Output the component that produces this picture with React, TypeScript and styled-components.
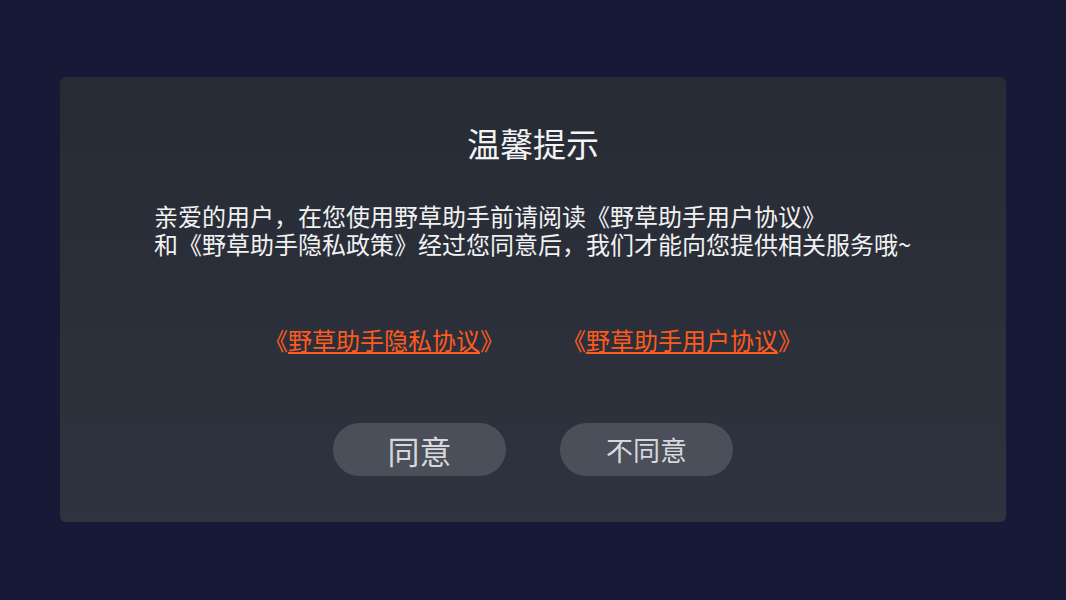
import React from "react";
import styled, { createGlobalStyle } from "styled-components";

const Global = createGlobalStyle`
  html, body { margin: 0; padding: 0; }
  body {
    background: #171a36;
    font-family: "Noto Sans CJK SC", "Noto Sans", sans-serif;
  }
`;

const Page = styled.div`
  width: 1066px;
  height: 600px;
  box-sizing: border-box;
  padding: 77px 60px 0 60px;
  background: #171a36;
`;

const Dialog = styled.div`
  width: 946px;
  height: 445px;
  box-sizing: border-box;
  border-radius: 6px;
  background: linear-gradient(180deg, #272b34 0%, #2e333f 100%);
  display: flex;
  flex-direction: column;
  align-items: center;
  padding: 46px 0 0 0;
`;

const Title = styled.h1`
  margin: 0;
  font-size: 33px;
  line-height: 40px;
  font-weight: 400;
  color: #f4f4f4;
`;

const Message = styled.p`
  align-self: stretch;
  margin: 39px 0 0 94px;
  font-size: 24px;
  line-height: 28px;
  color: #f2f2f2;
`;

const Links = styled.div`
  margin-top: 67px;
  display: flex;
  gap: 58px;
  height: 30px;
  align-items: center;
`;

const Link = styled.a`
  font-size: 24px;
  line-height: 30px;
  color: #ff5a1e;
  text-decoration: none;
  cursor: pointer;
  span {
    text-decoration: underline;
    text-underline-offset: 2px;
  }
`;

const Buttons = styled.div`
  margin-top: 68px;
  display: flex;
  gap: 54px;
`;

const Button = styled.button<{ $size: number }>`
  width: 173px;
  height: 53px;
  border: none;
  border-radius: 27px;
  background: #4a4f5a;
  color: #d6d8dc;
  font-family: "Noto Sans CJK SC", "Noto Sans", sans-serif;
  font-size: ${(p) => p.$size}px;
  display: flex;
  align-items: center;
  justify-content: center;
  padding: 0;
  cursor: pointer;
`;

export default function App() {
  return (
    <>
      <Global />
      <Page>
        <Dialog>
          <Title>温馨提示</Title>
          <Message>
            亲爱的用户，在您使用野草助手前请阅读《野草助手用户协议》
            <br />
            和《野草助手隐私政策》经过您同意后，我们才能向您提供相关服务哦~
          </Message>
          <Links>
            <Link>
              《<span>野草助手隐私协议</span>》
            </Link>
            <Link>
              《<span>野草助手用户协议</span>》
            </Link>
          </Links>
          <Buttons>
            <Button $size={32}>同意</Button>
            <Button $size={27}>不同意</Button>
          </Buttons>
        </Dialog>
      </Page>
    </>
  );
}
